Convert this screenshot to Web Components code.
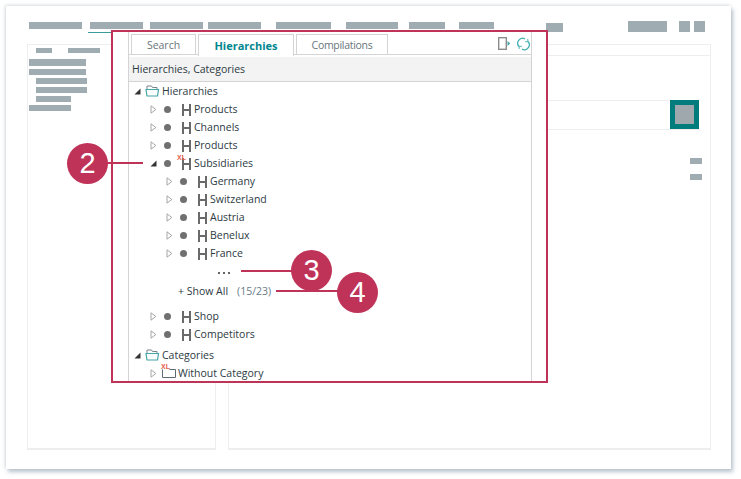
<!DOCTYPE html>
<html>
<head>
<meta charset="utf-8">
<style>
  html, body { margin: 0; padding: 0; background: #fff; }
  body { width: 741px; height: 479px; overflow: hidden; font-family: "Open Sans", "Liberation Sans", sans-serif; }
</style>
</head>
<body>
<app-screen>
  <tree-panel slot="overlay">
    <tree-row level="0" open folder>Hierarchies</tree-row>
    <tree-row level="1">Products</tree-row>
    <tree-row level="1">Channels</tree-row>
    <tree-row level="1">Products</tree-row>
    <tree-row level="1" open xl>Subsidiaries</tree-row>
    <tree-row level="2">Germany</tree-row>
    <tree-row level="2">Switzerland</tree-row>
    <tree-row level="2">Austria</tree-row>
    <tree-row level="2">Benelux</tree-row>
    <tree-row level="2">France</tree-row>
    <more-row></more-row>
    <tree-row level="1" style="margin-top:8px">Shop</tree-row>
    <tree-row level="1">Competitors</tree-row>
    <tree-row level="0" open folder style="margin-top:3px">Categories</tree-row>
    <tree-row level="1" empty xl>Without Category</tree-row>
  </tree-panel>
</app-screen>

<script>
class GreyBar extends HTMLElement {
  constructor() {
    super();
    const w = this.getAttribute("w") || 40;
    const h = this.getAttribute("h") || 7;
    this.attachShadow({ mode: "open" });
    this.shadowRoot.innerHTML = `
      <style>
        :host { display: block; flex: none; width: ${w}px; height: ${h}px; background: #9fadb2; }
      </style>`;
  }
}
customElements.define("grey-bar", GreyBar);

class AppScreen extends HTMLElement {
  constructor() {
    super();
    this.attachShadow({ mode: "open" });
    this.shadowRoot.innerHTML = `
      <style>
        :host {
          display: block;
          position: relative;
          box-sizing: border-box;
          width: 725px;
          height: 463px;
          margin: 6px 0 0 6px;
          padding: 15px 20px 0 21px;
          background: #fff;
          box-shadow: 2px 3px 4px rgba(130, 150, 165, .55), -1px -1px 3px rgba(170, 185, 190, .45);
        }
        .top { display: flex; align-items: flex-start; height: 23px; position: relative; }
        .top grey-bar { margin-top: 1px; }
        .active { position: relative; }
        .active::after { content: ""; position: absolute; left: -2px; right: 0; top: 10px; height: 1px; background: #3b9c9c; }
        .panels { display: flex; gap: 12px; height: 406px; }
        .box { box-sizing: border-box; border: 1px solid #eceeef; border-bottom-width: 2px; }
        .left { width: 189px; }
        .right { width: 484px; display: flex; flex-direction: column; }
        .ltabs { display: flex; gap: 16px; padding: 3px 8px 0; height: 11px; }
        .lrows { padding-top: 0; display: flex; flex-direction: column; gap: 3px; padding-left: 1px; }
        .rhead { height: 10px; border-bottom: 1px solid #eceeef; }
        .field { margin: 44px 11px 0 0; height: 28px; display: flex; justify-content: flex-end; border-top: 1px solid #eee; border-bottom: 1px solid #eee; }
        .go { box-sizing: border-box; width: 29px; height: 29px; margin-top: -1px; border: 5px solid #007c7c; background: #9fa9ad; }
        .small { align-self: flex-end; margin: 28px 8px 0 0; display: flex; flex-direction: column; gap: 10px; }
      </style>
      <div class="top">
        <grey-bar w="53" style="margin-left:2px"></grey-bar>
        <grey-bar w="53" class="active" style="margin-left:8px"></grey-bar>
        <grey-bar w="53" style="margin-left:7px"></grey-bar>
        <grey-bar w="53" style="margin-left:5px"></grey-bar>
        <grey-bar w="55" style="margin-left:15px"></grey-bar>
        <grey-bar w="52" style="margin-left:15px"></grey-bar>
        <grey-bar w="36" style="margin-left:11px"></grey-bar>
        <grey-bar w="35" style="margin-left:14px"></grey-bar>
        <grey-bar w="17" h="9" style="margin:2px 0 0 52px"></grey-bar>
        <grey-bar w="39" h="11" style="margin:0 0 0 65px"></grey-bar>
        <grey-bar w="11" h="11" style="margin:0 0 0 12px"></grey-bar>
        <grey-bar w="11" h="11" style="margin:0 0 0 4px"></grey-bar>
      </div>
      <div class="panels">
        <div class="box left">
          <div class="ltabs"><grey-bar w="16" h="5"></grey-bar><grey-bar w="32" h="5"></grey-bar></div>
          <div class="lrows">
            <grey-bar w="57"></grey-bar>
            <grey-bar w="57" h="6"></grey-bar>
            <grey-bar w="51" h="6" style="margin-left:7px"></grey-bar>
            <grey-bar w="51" h="6" style="margin-left:7px"></grey-bar>
            <grey-bar w="35" h="6" style="margin-left:7px"></grey-bar>
            <grey-bar w="42" h="6"></grey-bar>
          </div>
        </div>
        <div class="box right">
          <div class="rhead"></div>
          <div class="field"><div class="go"></div></div>
          <div class="small"><grey-bar w="12" h="6"></grey-bar><grey-bar w="12" h="6"></grey-bar></div>
        </div>
      </div>
      <slot name="overlay"></slot>
      <call-out n="2" style="left:61px;top:137px"></call-out>
      <call-out n="3" style="left:285px;top:244px"></call-out>
      <call-out n="4" style="left:331px;top:266px"></call-out>
      <call-line style="left:100px;top:156px;width:37px"></call-line>
      <call-line style="left:235px;top:264px;width:52px"></call-line>
      <call-line style="left:270px;top:284px;width:62px"></call-line>
    `;
  }
}
customElements.define("app-screen", AppScreen);

class CallOut extends HTMLElement {
  constructor() {
    super();
    this.attachShadow({ mode: "open" });
    this.shadowRoot.innerHTML = `
      <style>
        :host {
          display: flex; align-items: center; justify-content: center;
          position: absolute; width: 41px; height: 41px; border-radius: 50%;
          background: #bf3359; color: #fff; z-index: 3;
          font: 29px "Liberation Sans", sans-serif;
        }
      </style>${this.getAttribute("n")}`;
  }
}
customElements.define("call-out", CallOut);

class CallLine extends HTMLElement {
  constructor() {
    super();
    this.attachShadow({ mode: "open" });
    this.shadowRoot.innerHTML = `
      <style>
        :host { display: block; position: absolute; height: 2px; background: #bf3359; z-index: 2; }
      </style>`;
  }
}
customElements.define("call-line", CallLine);

class TreePanel extends HTMLElement {
  constructor() {
    super();
    this.attachShadow({ mode: "open" });
    this.shadowRoot.innerHTML = `
      <style>
        :host {
          display: block; position: absolute; left: 105px; top: 24px;
          box-sizing: border-box; width: 437px; height: 353px;
          border: 2px solid #bf3359; background: #fff; padding: 0 14px 0 15px;
          color: #33414a; font-size: 10.5px;
          overflow: hidden;
        }
        .inner { height: 100%; border-left: 1px solid #d4d4d4; border-right: 1px solid #d4d4d4; box-sizing: border-box; }
        .tabs { display: flex; gap: 2px; height: 20px; padding: 2px 0 0 2px; border-bottom: 1px solid #d4d4d4; position: relative; }
        .tab {
          box-sizing: border-box; height: 21px; margin-bottom: -1px;
          border: 1px solid #d4d4d4; border-bottom: 0;
          display: flex; align-items: center; justify-content: center;
          color: #68757c;
        }
        .on { color: #00868f; font-weight: 700; font-size: 11px; background: #fff; height: 22px; }
        .tight { letter-spacing: -.3px; }
        .tools { position: absolute; right: 1px; top: 5px; display: flex; gap: 6px; }
        .band { margin-top: 2px; height: 24px; background: #f3f3f3; border-bottom: 1px solid #d4d4d4; display: flex; align-items: center; padding-left: 3px; color: #2c3a42; }
        svg { display: block; }
      </style>
      <div class="inner">
        <div class="tabs">
          <div class="tab" style="width:65px">Search</div>
          <div class="tab on" style="width:96px">Hierarchies</div>
          <div class="tab tight" style="width:92px">Compilations</div>
          <div class="tools">
            <svg width="14" height="14" viewBox="0 0 14 14"><rect x="1.700" y="0.700" width="7.600" height="11.600" fill="#fff" stroke="#8d8d8d" stroke-width="1.400"/><path d="M10.500 4l2.800 2.500-2.800 2.500z" fill="#45a9ab"/></svg>
            <svg width="13" height="14" viewBox="0 0 13 14" fill="none" stroke="#45b0b2" stroke-width="1.300"><path d="M2.200 9.800A5 5 0 0 1 8 1.800"/><path d="M10.800 4.200A5 5 0 0 1 5 12.200"/><path d="M10.800 2v2.700H8.100M2.200 12V9.300h2.700" stroke-width=".9"/></svg>
          </div>
        </div>
        <div class="band">Hierarchies, Categories</div>
        <div class="tree"><slot></slot></div>
      </div>`;
  }
}
customElements.define("tree-panel", TreePanel);

class TreeRow extends HTMLElement {
  constructor() {
    super();
    const level = Number(this.getAttribute("level"));
    const open = this.hasAttribute("open");
    const folder = this.hasAttribute("folder");
    const empty = this.hasAttribute("empty");
    const xl = this.hasAttribute("xl");
    const arrow = open
      ? `<svg class="arrow" width="7" height="9" viewBox="0 0 7 9"><path d="M6.500 1.500v6h-6z" fill="#333"/></svg>`
      : `<svg class="arrow" width="7" height="9" viewBox="0 0 7 9"><path d="M1 .8l4.800 3.700L1 8.200z" fill="#fff" stroke="#a6a6a6"/></svg>`;
    let icon;
    if (folder) {
      icon = `<svg class="folder" width="15" height="12" viewBox="0 0 15 12" fill="none"><path d="M2 4V1h4.500l1 1.500H12V4" stroke="#77848a"/><path d="M1 4.500h12.500l-1 6.500H2z" stroke="#45a6a8" stroke-width="1.200"/></svg>`;
    } else if (empty) {
      icon = `<svg class="empty" width="14" height="10" viewBox="0 0 14 10" fill="none"><path d="M.5 1.500v8h13v-8h-6" stroke="#5d6a70"/></svg>`;
    } else {
      icon = `<span class="dot"></span><svg class="h" width="9" height="12" viewBox="0 0 9 12"><path d="M1 0v12M8 0v12M1 6h7" stroke="#6a6a6a" stroke-width="2" fill="none"/></svg>`;
    }
    this.attachShadow({ mode: "open" });
    this.shadowRoot.innerHTML = `
      <style>
        :host { display: flex; align-items: center; height: 18px; position: relative; padding-left: ${[5, 21, 37][level]}px; color: #2c3a42; white-space: nowrap; }
        .arrow { flex: none; }
        .dot { flex: none; width: 7px; height: 7px; border-radius: 50%; background: #707070; margin-left: 7px; }
        .h { flex: none; margin: 2px 3px 0 11px; }
        .folder { flex: none; margin: -1px 2px 0 4px; }
        .empty { flex: none; margin: 0 2px 0 5px; }
        .xl { position: absolute; color: #e8604c; font: 700 7px "Liberation Sans", sans-serif; }
      </style>
      ${arrow}${icon}<slot></slot>
      ${xl ? `<span class="xl" style="left:${empty ? 32 : 48}px;top:${empty ? -1 : 0}px">XL</span>` : ""}`;
  }
}
customElements.define("tree-row", TreeRow);

class MoreRow extends HTMLElement {
  constructor() {
    super();
    this.attachShadow({ mode: "open" });
    this.shadowRoot.innerHTML = `
      <style>
        :host { display: block; height: 37px; position: relative; }
        .dots { padding: 2px 0 0 89px; height: 18px; display: flex; align-items: center; gap: 3px; }
        .dots i { width: 2px; height: 2px; background: #666; }
        .all { height: 15px; padding: 1px 0 0 49px; display: flex; align-items: center; color: #2c3a42; white-space: nowrap; }
        .count { margin-left: 9px; color: #6b7b88; }
      </style>
      <div class="dots"><i></i><i></i><i></i></div>
      <div class="all">+ Show All <span class="count">(15/23)</span></div>`;
  }
}
customElements.define("more-row", MoreRow);
</script>
</body>
</html>
